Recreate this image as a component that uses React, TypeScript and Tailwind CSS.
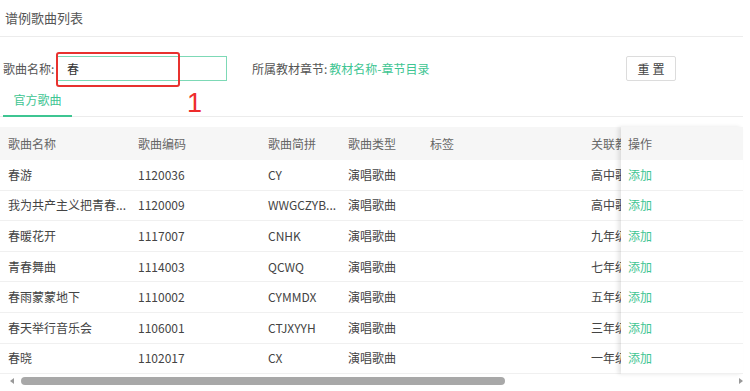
const rows = [
  { name: "春游", code: "1120036", py: "CY", grade: "高中歌" },
  { name: "我为共产主义把青春...", code: "1120009", py: "WWGCZYB...", grade: "高中歌" },
  { name: "春暖花开", code: "1117007", py: "CNHK", grade: "九年级" },
  { name: "青春舞曲", code: "1114003", py: "QCWQ", grade: "七年级" },
  { name: "春雨蒙蒙地下", code: "1110002", py: "CYMMDX", grade: "五年级" },
  { name: "春天举行音乐会", code: "1106001", py: "CTJXYYH", grade: "三年级" },
  { name: "春晓", code: "1102017", py: "CX", grade: "一年级" },
];

const font = { fontFamily: '"Noto Sans CJK SC", "Noto Sans", sans-serif' };

export default function App() {
  return (
    <div className="relative w-[750px] h-[391px] overflow-hidden bg-white text-[#333]" style={font}>
      {/* Title */}
      <div className="w-[743px] h-[37px] pl-[5px] flex items-center border-b border-[#ececec] text-[13px] text-[#555]">
        谱例歌曲列表
      </div>

      {/* Filters */}
      <div className="w-[743px] mt-[19px] h-[25px] flex items-center text-[12px]">
        <span className="pl-[3px] w-[56px] text-[#555]">歌曲名称:</span>
        <div className="w-[171px] h-[25px] border border-[#7dd9b6] flex items-center pl-[10px] text-[#333]">春</div>
        <span className="ml-[25px] text-[#555]">所属教材章节:</span>
        <span className="ml-[2px] text-[#3ec592]">教材名称-章节目录</span>
        <button className="ml-auto mr-[67px] w-[50px] h-[25px] border border-[#dcdcdc] rounded-[2px] text-[12px] text-[#444] tracking-[3px] pl-[3px]">
          重置
        </button>
      </div>

      {/* Tab */}
      <div className="w-[743px] mt-[3px] h-[33px] border-b border-[#ececec] flex items-end pl-[3px]">
        <div className="w-[69px] h-[33px] border-b-2 border-[#3ec592] flex items-center justify-center text-[12px] text-[#3ec592] -mb-px">
          官方歌曲
        </div>
      </div>

      {/* Table */}
      <div className="w-[743px] mt-[10px] flex text-[12px]">
        <div className="w-[621px] overflow-hidden">
          <div className="flex h-[33px] items-center bg-[#f6f6f6] text-[#666]">
            <div className="w-[130px] pl-[8px] shrink-0">歌曲名称</div>
            <div className="w-[130px] pl-[8px] shrink-0">歌曲编码</div>
            <div className="w-[80px] pl-[8px] shrink-0">歌曲简拼</div>
            <div className="w-[82px] pl-[8px] shrink-0">歌曲类型</div>
            <div className="w-[161px] pl-[8px] shrink-0">标签</div>
            <div className="w-[38px] pl-[8px] shrink-0 overflow-hidden whitespace-nowrap">关联教材章节</div>
          </div>
          {rows.map((r) => (
            <div key={r.code} className="flex h-[30.6px] items-center border-b border-[#f0f0f0] text-[#444]">
              <div className="w-[130px] pl-[8px] shrink-0 whitespace-nowrap">{r.name}</div>
              <div className="w-[130px] pl-[8px] shrink-0">{r.code}</div>
              <div className="w-[80px] pl-[8px] shrink-0">{r.py}</div>
              <div className="w-[82px] pl-[8px] shrink-0">演唱歌曲</div>
              <div className="w-[161px] pl-[8px] shrink-0"></div>
              <div className="w-[38px] pl-[8px] shrink-0 overflow-hidden whitespace-nowrap">{r.grade}歌曲</div>
            </div>
          ))}
        </div>
        <div className="w-[122px] shadow-[-3px_0_4px_rgba(0,0,0,0.10)] bg-white z-10">
          <div className="h-[33px] flex items-center pl-[7px] bg-[#f6f6f6] text-[#666]">操作</div>
          {rows.map((r) => (
            <div key={r.code} className="h-[30.6px] flex items-center pl-[7px] border-b border-[#f0f0f0] text-[#3ec592]">
              添加
            </div>
          ))}
        </div>
      </div>

      {/* Horizontal scrollbar */}
      <div className="w-[750px] h-[14px] flex items-center">
        <div className="w-[21px] flex justify-center pl-[2px]">
          <div className="w-0 h-0 border-y-[3px] border-y-transparent border-r-[4px] border-r-[#999]" />
        </div>
        <div className="w-[484px] h-[8px] rounded-full bg-[#a8a8a8]" />
        <div className="ml-auto mr-[7px] w-0 h-0 border-y-[3px] border-y-transparent border-l-[4px] border-l-[#999]" />
      </div>

      {/* Annotations */}
      <div className="absolute left-[56px] top-[52px] w-[124px] h-[35px] border-2 border-[#e8322f] rounded-[3px]" />
      <div className="absolute left-[187px] top-[90px] text-[27px] leading-none text-[#ee2c2c]" style={{ fontFamily: '"Liberation Sans", sans-serif' }}>
        1
      </div>
      <div className="absolute left-[707px] top-[173px] text-[27px] leading-none text-[#ee2c2c]" style={{ fontFamily: '"Liberation Sans", sans-serif' }}>
        2
      </div>
      <svg className="absolute left-0 top-0" width="750" height="391" viewBox="0 0 750 391">
        <polygon points="718.5,199 719.5,199.6 664,322 659.5,319.8" fill="#f0262a" />
        <polygon points="655,312 669,319 655,337" fill="#f0262a" />
      </svg>
    </div>
  );
}
